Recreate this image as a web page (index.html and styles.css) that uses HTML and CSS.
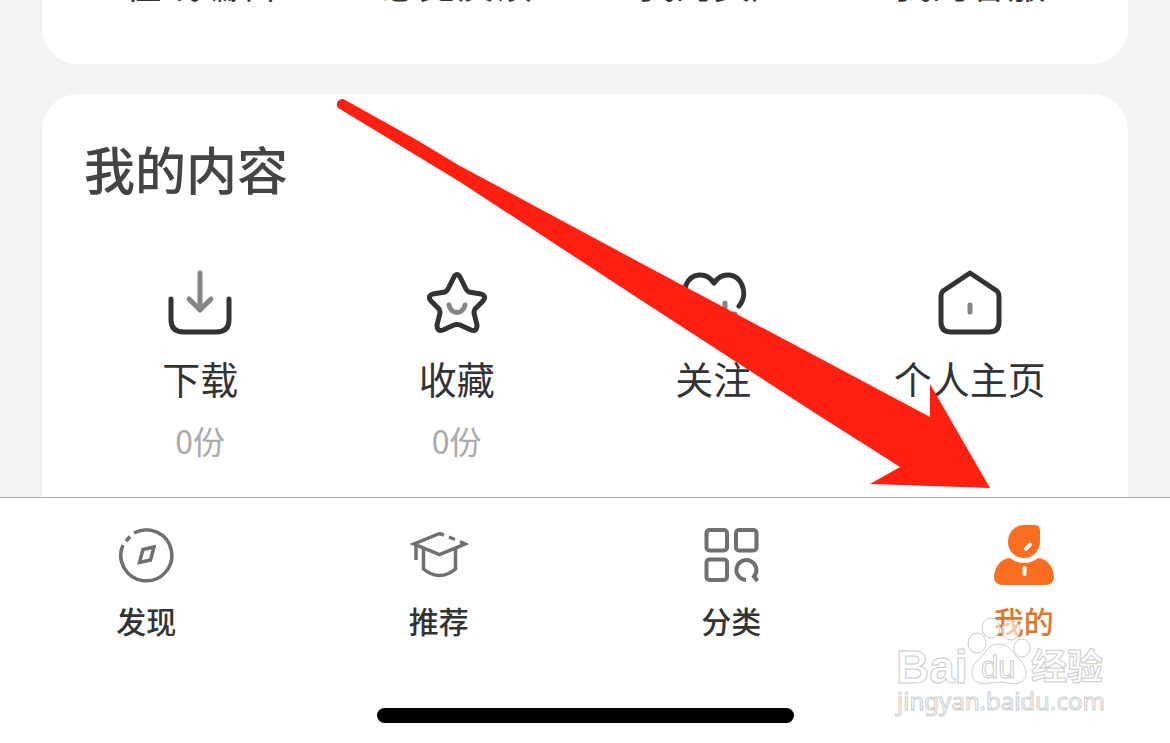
FILE: index.html
```html
<!DOCTYPE html>
<html lang="zh-CN">
<head>
    <meta charset="UTF-8">
    <meta name="viewport" content="width=device-width, initial-scale=1.0">
    <title>我的</title>
    <link rel="stylesheet" href="styles.css">
</head>
<body>
    <main class="content">
        <section class="card card-services">
            <div class="grid">
                <a class="item" href="#"><span class="label">在线编辑</span></a>
                <a class="item" href="#"><span class="label">意见反馈</span></a>
                <a class="item" href="#"><span class="label">我的资产</span></a>
                <a class="item" href="#"><span class="label">我的客服</span></a>
            </div>
        </section>

        <section class="card card-mine">
            <h2>我的内容</h2>
            <div class="grid">
                <a class="item" href="#">
                    <svg class="icon" viewBox="0 0 68 68">
                        <path d="M5 31V52Q5 64 18 64H50Q63 64 63 52V31"/>
                        <path class="soft" d="M34 5V42M23 31L34 42L45 31"/>
                    </svg>
                    <span class="label">下载</span>
                    <span class="count">0份</span>
                </a>
                <a class="item" href="#">
                    <svg class="icon" viewBox="0 0 68 68">
                        <path d="M31 9Q34 4 37 9L43 21Q44 23 46 24L58 26Q64 28 60 33L52 41Q51 43 51 45L54 57Q54 64 48 62L37 57Q34 56 31 57L20 62Q14 64 14 57L17 45Q17 43 16 41L8 33Q4 28 10 26L22 24Q24 23 25 21Z"/>
                        <path class="soft" d="M26 37C28 47 40 47 42 37"/>
                    </svg>
                    <span class="label">收藏</span>
                    <span class="count">0份</span>
                </a>
                <a class="item" href="#">
                    <svg class="icon" viewBox="0 0 68 68">
                        <path d="M60 38C65 32 66 24 63 17C58 5 43 3 35 15C27 3 12 5 7 17C4 26 5 34 11 40L35 63"/>
                        <path class="soft" d="M46 35V56M36 46H56"/>
                    </svg>
                    <span class="label">关注</span>
                </a>
                <a class="item" href="#">
                    <svg class="icon" viewBox="0 0 68 68">
                        <path d="M34 5L61 23Q63 25 63 28V54Q63 64 53 64H15Q5 64 5 54V28Q5 25 7 23Z"/>
                        <path class="soft" d="M34 37V44"/>
                    </svg>
                    <span class="label">个人主页</span>
                </a>
            </div>
        </section>
    </main>

    <nav class="tabbar">
        <div class="tabs">
            <a class="tab" href="#">
                <svg class="tab-icon" viewBox="0 0 60 60">
                    <path d="M18 8A25.500 25.500 0 1 1 7 20M10 16L14 11.500"/>
                    <path d="M38 22L27 24.500L23.500 37.500L34.500 35Z"/>
                </svg>
                <span>发现</span>
            </a>
            <a class="tab" href="#">
                <svg class="tab-icon" viewBox="0 0 60 60">
                    <path d="M35 10L30.500 8.500L5 19L30.500 29.500L56 19L51 16.500M40 12L46 14.500"/>
                    <path d="M7 20V35M14.500 24V44Q22 50.500 30.500 50.500T46.500 44V24"/>
                </svg>
                <span>推荐</span>
            </a>
            <a class="tab" href="#">
                <svg class="tab-icon thick" viewBox="0 0 60 60">
                    <rect x="5.500" y="5" width="20.500" height="20.500" rx="3"/>
                    <rect x="35" y="5" width="20.500" height="20.500" rx="3"/>
                    <rect x="5.500" y="34.500" width="20.500" height="20.500" rx="3"/>
                    <path d="M45 55A10 10 0 1 1 53 51.500L56.500 56"/>
                </svg>
                <span>分类</span>
            </a>
            <a class="tab active" href="#">
                <svg class="tab-icon solid" viewBox="0 0 60 60">
                    <path d="M16 33C5 34 0 44 0 53Q1 60 8 60H52Q59 60 60 53C60 44 55 34 44 33Q38 38 30 38T16 33Z"/>
                    <path d="M30 0H41Q46 0 46 6V16C46 26 39 33 30 33C21 33 14 26 14 17C14 7 21 0 30 0Z"/>
                    <path class="shine" d="M32 24L36 19.500M30.500 43V49"/>
                </svg>
                <span>我的</span>
            </a>
        </div>
        <div class="home-indicator"></div>
    </nav>

    <svg class="arrow" width="660" height="400" viewBox="335 95 660 400">
        <path d="M345 100L415 139L460 166L650 268L930 417V384L990 488L870 484L900 467L818 415L650 306L460 182L339 108.500A5 5 0 0 1 345 100Z"/>
    </svg>

    <svg class="watermark" width="220" height="110" viewBox="892 612 220 110">
        <g class="paw">
            <ellipse cx="977" cy="643" rx="9" ry="10"/>
            <ellipse cx="991" cy="628" rx="9" ry="10"/>
            <ellipse cx="1011" cy="630" rx="9" ry="10"/>
            <ellipse cx="1022" cy="648" rx="8" ry="9"/>
            <path d="M999 644C988 644 986 653 979 659C970 666 970 678 977 682C984 686 992 682 999 682S1015 686 1021 682C1029 677 1027 667 1019 659C1012 653 1010 644 999 644Z"/>
        </g>
        <text class="wm-bai" x="896" y="683">Bai</text>
        <text class="wm-du" x="981" y="678">du</text>
        <text class="wm-cn" x="1031" y="680">经验</text>
        <text class="wm-url" x="897" y="710">jingyan.baidu.com</text>
    </svg>
</body>
</html>
```
FILE: styles.css
```css
body {
    font-family: "Noto Sans CJK SC", sans-serif;
    background-color: #f3f3f3;
    color: #333;
    margin: 0;
    display: flex;
    flex-direction: column;
    height: 100vh;
    overflow: hidden;
    position: relative;
}

a {
    color: inherit;
    text-decoration: none;
}

.content {
    flex: 1;
    min-height: 0;
    overflow: hidden;
    display: flex;
    flex-direction: column;
    gap: 30px;
    padding: 0 42px;
}

.card {
    background-color: #fff;
    border-radius: 36px;
    padding: 44px 30px 80px;
    flex-shrink: 0;
}

/* scrolled up under the top of the screen */
.card-services {
    margin-top: -86px;
    padding-bottom: 58px;
}

.card h2 {
    margin: 0 12px 70px;
    font-size: 51px;
    line-height: 60px;
    font-weight: 500;
    color: #444;
}

.grid {
    display: grid;
    grid-template-columns: repeat(4, 1fr);
}

.item {
    display: flex;
    flex-direction: column;
    align-items: center;
    gap: 18px;
}

.icon {
    width: 68px;
    height: 68px;
    fill: none;
    stroke: #333;
    stroke-width: 5;
    stroke-linecap: round;
    stroke-linejoin: round;
}

.icon .soft {
    stroke: #858585;
}

.label {
    font-size: 38px;
    line-height: 48px;
}

.count {
    font-size: 32px;
    line-height: 40px;
    color: #aaa;
}

.tabbar {
    background-color: #fff;
    border-top: 1px solid #aaa;
    padding: 27px 0 20px;
    display: flex;
    flex-direction: column;
    align-items: center;
    gap: 68px;
}

.tabs {
    width: 100%;
    display: grid;
    grid-template-columns: repeat(4, 1fr);
}

.tab {
    display: flex;
    flex-direction: column;
    align-items: center;
    gap: 15px;
    font-size: 30px;
    line-height: 40px;
    font-weight: 500;
}

.tab.active {
    color: #e0762c;
}

.tab-icon {
    width: 60px;
    height: 60px;
    fill: none;
    stroke: #707070;
    stroke-width: 3.5;
}

.tab-icon.thick {
    stroke-width: 4;
}

.tab-icon.solid {
    fill: #fa6e22;
    stroke: none;
}

.tab-icon .shine {
    stroke: #fff;
    stroke-width: 4;
    stroke-linecap: round;
}

.home-indicator {
    width: 36%;
    max-width: 417px;
    height: 15px;
    border-radius: 8px;
    background-color: #000;
}

.arrow {
    position: absolute;
    left: 335px;
    top: 95px;
    fill: #ff2012;
}

.watermark {
    position: absolute;
    right: 58px;
    bottom: 21px;
    fill: #fff;
    fill-opacity: 0.8;
    stroke: #ccc;
    stroke-width: 1;
    font-family: "Liberation Sans", "Noto Sans CJK SC", sans-serif;
}

.paw {
    fill-opacity: 0.6;
}

.wm-bai {
    font-size: 46px;
    font-weight: bold;
}

.wm-du {
    font-size: 31px;
}

.wm-cn {
    font-size: 36px;
    font-weight: bold;
}

.wm-url {
    font-family: "Noto Sans", sans-serif;
    font-size: 24px;
}
```
